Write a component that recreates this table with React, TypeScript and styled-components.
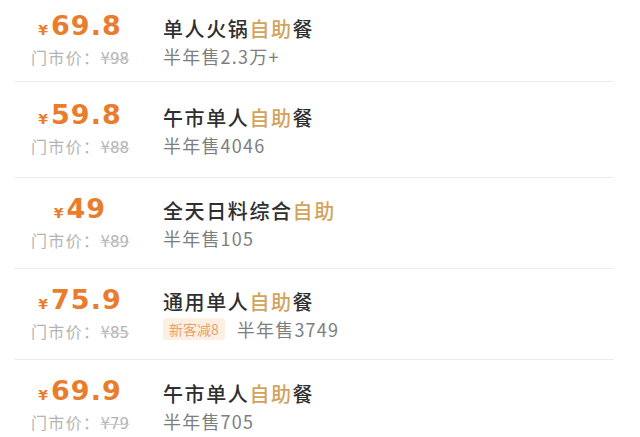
import styled, { createGlobalStyle } from 'styled-components';

const GlobalStyle = createGlobalStyle`
    html, body {
        margin: 0;
        padding: 0;
        background: #ffffff;
    }
    body {
        font-family: 'Noto Sans CJK SC', 'Noto Sans', sans-serif;
    }
`;

type Deal = {
    price: string;
    original: string;
    name: string;
    tail: string;
    sold: string;
    badge?: string;
};

const deals: Deal[] = [
    { price: '69.8', original: '98', name: '单人火锅', tail: '餐', sold: '半年售2.3万+' },
    { price: '59.8', original: '88', name: '午市单人', tail: '餐', sold: '半年售4046' },
    { price: '49', original: '89', name: '全天日料综合', tail: '', sold: '半年售105' },
    { price: '75.9', original: '85', name: '通用单人', tail: '餐', sold: '半年售3749', badge: '新客减8' },
    { price: '69.9', original: '79', name: '午市单人', tail: '餐', sold: '半年售705' },
];

const List = styled.div`
    display: flex;
    flex-direction: column;
    width: 640px;
`;

const Row = styled.div`
    display: flex;
    align-items: center;
    gap: 17px;
    height: 91px;
    margin: 0 26px 0 14px;
    border-bottom: 1px solid #ececec;
    box-sizing: border-box;

    &:first-child {
        height: 82px;
    }
    &:nth-child(2) {
        height: 96px;
    }
    &:last-child {
        border-bottom: none;
    }
`;

const PriceCol = styled.div`
    width: 132px;
    display: flex;
    flex-direction: column;
    align-items: center;
    gap: 3px;
`;

const Price = styled.div`
    font-family: 'DejaVu Sans', sans-serif;
    font-weight: 700;
    font-size: 27px;
    line-height: 28px;
    letter-spacing: 1px;
    color: #ea7d2c;
    white-space: nowrap;
`;

const Yen = styled.span`
    font-size: 14px;
    letter-spacing: 0;
    margin-right: 3px;
`;

const Original = styled.div`
    font-size: 16px;
    line-height: 20px;
    letter-spacing: 1.4px;
    color: #b4b4b4;
    white-space: nowrap;
`;

const Struck = styled.span`
    font-family: 'DejaVu Sans', sans-serif;
    font-size: 15px;
    letter-spacing: 0;
    text-decoration: line-through;
    text-decoration-color: #cccccc;
`;

const Info = styled.div`
    display: flex;
    flex-direction: column;
    gap: 2px;
`;

const Title = styled.div`
    font-size: 20px;
    font-weight: 500;
    line-height: 28px;
    letter-spacing: 1.6px;
    color: #2f2f2f;
    white-space: nowrap;
`;

const Accent = styled.span`
    color: #d2a35a;
`;

const Meta = styled.div`
    display: flex;
    align-items: center;
    gap: 12px;
`;

const Sold = styled.span`
    font-size: 18px;
    line-height: 22px;
    letter-spacing: 1.2px;
    color: #7e7e7e;
    white-space: nowrap;
`;

const Badge = styled.span`
    font-size: 14px;
    line-height: 18px;
    padding: 2px 6px;
    border-radius: 3px;
    background: #fdf0e3;
    color: #e9a06a;
    white-space: nowrap;
`;

export default function App() {
    return (
        <>
            <GlobalStyle />
            <List>
                {deals.map((d) => (
                    <Row key={d.name + d.price}>
                        <PriceCol>
                            <Price>
                                <Yen>¥</Yen>
                                {d.price}
                            </Price>
                            <Original>
                                门市价：<Struck>¥{d.original}</Struck>
                            </Original>
                        </PriceCol>
                        <Info>
                            <Title>
                                {d.name}
                                <Accent>自助</Accent>
                                {d.tail}
                            </Title>
                            <Meta>
                                {d.badge && <Badge>{d.badge}</Badge>}
                                <Sold>{d.sold}</Sold>
                            </Meta>
                        </Info>
                    </Row>
                ))}
            </List>
        </>
    );
}
